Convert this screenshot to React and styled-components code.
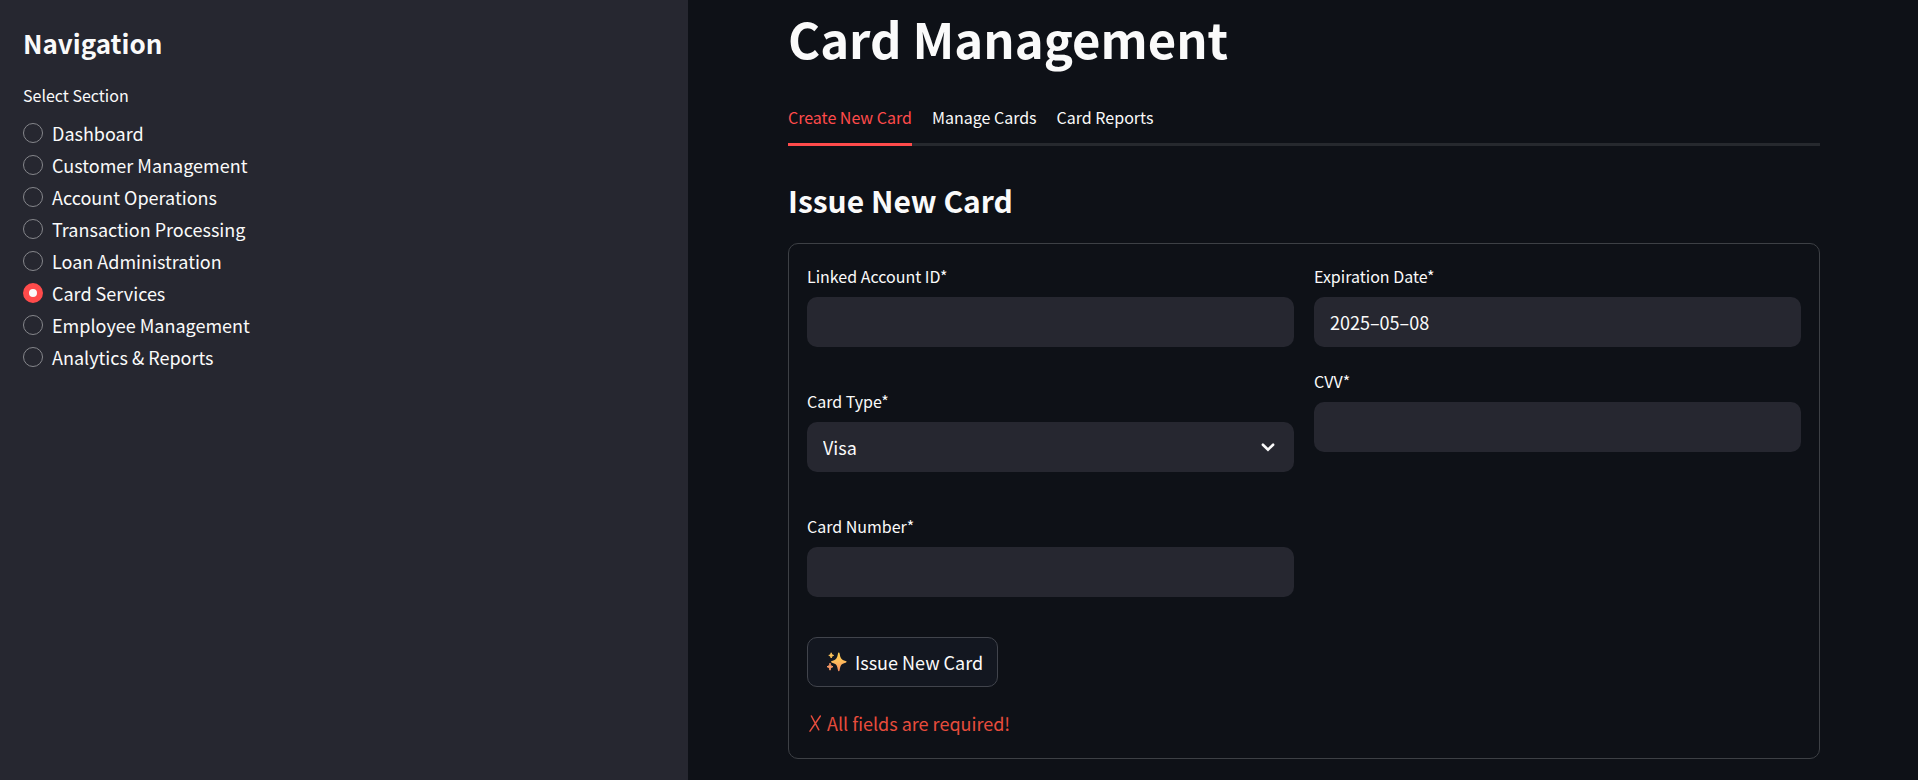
import React, { useState } from 'react';
import styled, { createGlobalStyle } from 'styled-components';

const GlobalStyle = createGlobalStyle`
  *, *::before, *::after { box-sizing: border-box; }
  body {
    margin: 0;
    background: #0e1117;
    color: #fafafa;
    font-family: "Noto Sans CJK SC", "Noto Sans", sans-serif;
    font-size: 18px;
    line-height: 32px;
  }
  button, input, select { font: inherit; color: inherit; }
`;

const Page = styled.div`
  display: flex;
  min-height: 100vh;
`;

const Sidebar = styled.aside`
  flex: 0 0 688px;
  padding: 25px 23px;
  background: #262730;
`;

const SidebarTitle = styled.h2`
  margin: 0 0 20px;
  font-size: 26px;
  line-height: 36px;
  font-weight: 600;
`;

const RadioGroup = styled.fieldset`
  margin: 0;
  padding: 0;
  border: 0;
`;

const Legend = styled.legend`
  padding: 0;
  margin-bottom: 8px;
  font-size: 16px;
  line-height: 28px;
`;

const RadioRow = styled.label`
  display: flex;
  align-items: center;
  gap: 9px;
  height: 32px;
  cursor: pointer;
`;

const Radio = styled.input`
  appearance: none;
  width: 20px;
  height: 20px;
  margin: 0;
  border: 1px solid #85868b;
  border-radius: 50%;

  &:checked {
    border: 6px solid #ff4b4b;
    background: #fafafa;
  }
`;

const Main = styled.main`
  flex: 1;
  min-width: 0;
  padding: 8px 98px 20px 100px;
`;

const Title = styled.h1`
  margin: 0 0 28px;
  font-size: 49px;
  line-height: 60px;
  font-weight: 700;
`;

const TabList = styled.div`
  display: flex;
  gap: 20px;
  box-shadow: inset 0 -3px #26292e;
`;

const Tab = styled.button`
  padding: 7px 0 12px;
  border: 0;
  border-bottom: 3px solid ${(p) => (p.$active ? '#ff4b4b' : 'transparent')};
  background: none;
  color: ${(p) => (p.$active ? '#ff4b4b' : '#fafafa')};
  font-size: 16px;
  line-height: 28px;
  cursor: pointer;
`;

const SectionTitle = styled.h2`
  margin: 34px 0 23px;
  font-size: 30px;
  line-height: 40px;
  font-weight: 600;
`;

const CardForm = styled.form`
  padding: 18px 18px 19px;
  border: 1px solid #3d4045;
  border-radius: 10px;
`;

const Columns = styled.div`
  display: grid;
  grid-template-columns: 1fr 1fr;
  gap: 20px;
`;

const Column = styled.div`
  display: flex;
  flex-direction: column;
  gap: ${(p) => p.$gap}px;
`;

const FieldLabel = styled.label`
  display: block;
  margin-bottom: 7px;
  font-size: 16px;
  line-height: 28px;
`;

const TextInput = styled.input`
  display: block;
  width: 100%;
  height: 50px;
  padding: 0 16px;
  border: 0;
  border-radius: 10px;
  background: #262730;
`;

const SelectWrap = styled.div`
  position: relative;
`;

const Select = styled.select`
  display: block;
  appearance: none;
  width: 100%;
  height: 50px;
  padding: 0 16px;
  border: 0;
  border-radius: 10px;
  background: #262730;
`;

const Chevron = styled.svg`
  position: absolute;
  top: 16px;
  right: 16px;
  pointer-events: none;
`;

const SubmitButton = styled.button`
  display: flex;
  align-items: center;
  gap: 8px;
  height: 50px;
  margin: 40px 0 20px;
  padding: 0 14px 0 18px;
  border: 1px solid #41444c;
  border-radius: 10px;
  background: #131720;
  cursor: pointer;
`;

const ErrorText = styled.p`
  display: flex;
  align-items: center;
  gap: 6px;
  margin: 0;
  padding-left: 2px;
  color: #e74c3c;
`;

const sections = [
  'Dashboard',
  'Customer Management',
  'Account Operations',
  'Transaction Processing',
  'Loan Administration',
  'Card Services',
  'Employee Management',
  'Analytics & Reports',
];

const tabs = ['Create New Card', 'Manage Cards', 'Card Reports'];

function TextField({ id, label, ...rest }) {
  return (
    <div>
      <FieldLabel htmlFor={id}>{label}</FieldLabel>
      <TextInput id={id} type="text" {...rest} />
    </div>
  );
}

function Sparkles() {
  return (
    <svg width="21" height="20" viewBox="0 0 21 20" aria-hidden="true">
      <defs>
        <linearGradient id="spark" x1="0" y1="0" x2="0" y2="1">
          <stop offset="0" stopColor="#fdd04e" />
          <stop offset="0.5" stopColor="#fdb95c" />
          <stop offset="1" stopColor="#f98a5e" />
        </linearGradient>
      </defs>
      <path fill="url(#spark)" d="M12.8 .6c.5 0 .7.4.8.9.8 4.7 1.6 6.3 6 7.4.6.2 1 .4 1 .9s-.4.7-1 .9c-4.4 1.1-5.2 2.7-6 7.6-.1.5-.3.9-.8.9s-.7-.4-.8-.9c-.8-4.900-1.600-6.500-6-7.600-.6-.2-1-.4-1-.9s.4-.7 1-.9c4.400-1.100 5.200-2.700 6-7.400.1-.5.3-.9.8-.9z" />
      <path fill="#fdc45a" stroke="#fdc45a" strokeWidth="1" strokeLinejoin="round" d="M5.200 .8c.4 1.700.8 2.100 2.400 2.600-1.600.5-2 .9-2.400 2.600-.4-1.700-.8-2.100-2.400-2.600 1.600-.5 2-.9 2.400-2.600z" />
      <path fill="#f99a68" stroke="#f99a68" strokeWidth="1" strokeLinejoin="round" d="M4 11.200c.5 2.300 1 2.900 3 3.500-2 .6-2.500 1.200-3 3.500-.5-2.300-1-2.900-3-3.500 2-.6 2.500-1.200 3-3.500z" />
    </svg>
  );
}

export default function App() {
  const [section, setSection] = useState('Card Services');
  const [tab, setTab] = useState(tabs[0]);

  return (
    <Page>
      <GlobalStyle />
      <Sidebar>
        <SidebarTitle>Navigation</SidebarTitle>
        <RadioGroup>
          <Legend>Select Section</Legend>
          {sections.map((name) => (
            <RadioRow key={name}>
              <Radio
                type="radio"
                name="section"
                checked={section === name}
                onChange={() => setSection(name)}
              />
              {name}
            </RadioRow>
          ))}
        </RadioGroup>
      </Sidebar>
      <Main>
        <Title>Card Management</Title>
        <TabList role="tablist">
          {tabs.map((name) => (
            <Tab
              key={name}
              type="button"
              role="tab"
              aria-selected={tab === name}
              $active={tab === name}
              onClick={() => setTab(name)}
            >
              {name}
            </Tab>
          ))}
        </TabList>
        <SectionTitle>Issue New Card</SectionTitle>
        <CardForm onSubmit={(e) => e.preventDefault()}>
          <Columns>
            <Column $gap={40}>
              <TextField id="account" label="Linked Account ID*" />
              <div>
                <FieldLabel htmlFor="type">Card Type*</FieldLabel>
                <SelectWrap>
                  <Select id="type" defaultValue="Visa">
                    <option>Visa</option>
                    <option>Mastercard</option>
                  </Select>
                  <Chevron width="20" height="20" viewBox="0 0 20 20" aria-hidden="true">
                    <path d="M4.9 6.7 10 11.7 15.1 6.7" fill="none" stroke="#fafafa" strokeWidth="2.6" strokeLinecap="round" />
                  </Chevron>
                </SelectWrap>
              </div>
              <TextField id="number" label="Card Number*" />
            </Column>
            <Column $gap={20}>
              <TextField id="expiry" label="Expiration Date*" defaultValue="2025–05–08" />
              <TextField id="cvv" label="CVV*" />
            </Column>
          </Columns>
          <SubmitButton type="submit">
            <Sparkles />
            Issue New Card
          </SubmitButton>
          <ErrorText role="alert">
            <svg width="12" height="18" viewBox="0 0 12 18" aria-hidden="true">
              <path d="M2.4 2 9.8 15.8M11.4 2 1 17.2" fill="none" stroke="currentColor" strokeWidth="1.5" strokeLinecap="round" />
            </svg>
            All fields are required!
          </ErrorText>
        </CardForm>
      </Main>
    </Page>
  );
}
